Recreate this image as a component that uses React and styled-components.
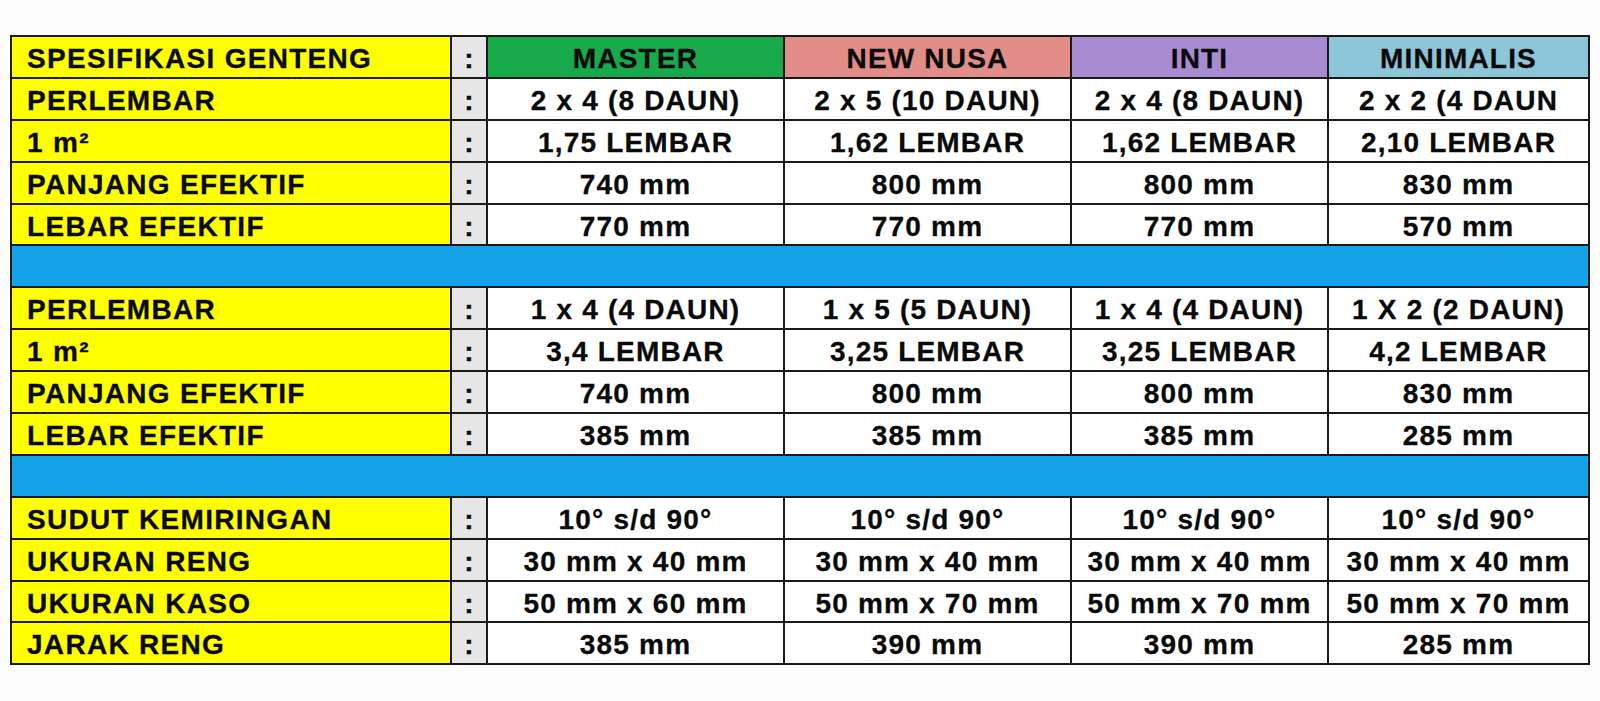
import React from "react";
import styled, { createGlobalStyle } from "styled-components";

const Global = createGlobalStyle`
  html, body { margin: 0; padding: 0; background: #ffffff; }
  body { font-family: "Liberation Sans", Arial, sans-serif; }
`;

const Page = styled.div`
  width: 1600px;
  height: 701px;
  box-sizing: border-box;
  padding: 35px 0 0 10px;
  background: #fdfdfd;
`;

const Table = styled.table`
  border-collapse: collapse;
  table-layout: fixed;
  width: 1578px;
  border: 2px solid #1a1a1a;
  font-family: "Liberation Sans", Arial, sans-serif;
  font-weight: 700;
  font-size: 28px;
  letter-spacing: 1.2px;
  color: #0a0a0a;
  -webkit-text-stroke: 0.3px #0a0a0a;
`;

const Row = styled.tr`
  height: 41.9px;
`;

const Cell = styled.td`
  border: 2px solid #1a1a1a;
  padding: 4px 0 0;
  line-height: 1;
  white-space: nowrap;
  overflow: hidden;
  vertical-align: middle;
`;

const LabelCell = styled(Cell)`
  background: #ffff00;
  padding-left: 15px;
  text-align: left;
  letter-spacing: 1.3px;
`;

const ColonCell = styled(Cell)`
  background: #e6e6e6;
  text-align: center;
  letter-spacing: 0;
`;

const HeaderCell = styled(Cell)`
  background: ${(p) => p.$bg};
  text-align: center;
`;

const ValueCell = styled(Cell)`
  background: #ffffff;
  text-align: center;
`;

const SeparatorCell = styled.td`
  background: #14a2e8;
  padding: 0;
  border-left: 2px solid #1a1a1a;
  border-right: 2px solid #1a1a1a;
`;

const columns = [
  { name: "MASTER", bg: "#17a94a" },
  { name: "NEW NUSA", bg: "#e38d88" },
  { name: "INTI", bg: "#a98bd1" },
  { name: "MINIMALIS", bg: "#8dc5d9" },
];

const sections = [
  [
    ["PERLEMBAR", ["2 x 4 (8 DAUN)", "2 x 5 (10 DAUN)", "2 x 4 (8 DAUN)", "2 x 2 (4 DAUN"]],
    ["1 m²", ["1,75 LEMBAR", "1,62 LEMBAR", "1,62 LEMBAR", "2,10 LEMBAR"]],
    ["PANJANG EFEKTIF", ["740 mm", "800 mm", "800 mm", "830 mm"]],
    ["LEBAR EFEKTIF", ["770 mm", "770 mm", "770 mm", "570 mm"]],
  ],
  [
    ["PERLEMBAR", ["1 x 4 (4 DAUN)", "1 x 5 (5 DAUN)", "1 x 4 (4 DAUN)", "1 X 2 (2 DAUN)"]],
    ["1 m²", ["3,4 LEMBAR", "3,25 LEMBAR", "3,25 LEMBAR", "4,2 LEMBAR"]],
    ["PANJANG EFEKTIF", ["740 mm", "800 mm", "800 mm", "830 mm"]],
    ["LEBAR EFEKTIF", ["385 mm", "385 mm", "385 mm", "285 mm"]],
  ],
  [
    ["SUDUT KEMIRINGAN", ["10° s/d 90°", "10° s/d 90°", "10° s/d 90°", "10° s/d 90°"]],
    ["UKURAN RENG", ["30 mm x 40 mm", "30 mm x 40 mm", "30 mm x 40 mm", "30 mm x 40 mm"]],
    ["UKURAN KASO", ["50 mm x 60 mm", "50 mm x 70 mm", "50 mm x 70 mm", "50 mm x 70 mm"]],
    ["JARAK RENG", ["385 mm", "390 mm", "390 mm", "285 mm"]],
  ],
];

export default function App() {
  return (
    <>
      <Global />
      <Page>
        <Table>
          <colgroup>
            <col style={{ width: 440 }} />
            <col style={{ width: 36 }} />
            <col style={{ width: 297 }} />
            <col style={{ width: 287 }} />
            <col style={{ width: 257 }} />
            <col style={{ width: 261 }} />
          </colgroup>
          <tbody>
            <Row>
              <LabelCell>SPESIFIKASI GENTENG</LabelCell>
              <ColonCell>:</ColonCell>
              {columns.map((c) => (
                <HeaderCell key={c.name} $bg={c.bg}>
                  {c.name}
                </HeaderCell>
              ))}
            </Row>
            {sections.map((rows, si) => (
              <React.Fragment key={si}>
                {si > 0 && (
                  <Row>
                    <SeparatorCell colSpan={6} />
                  </Row>
                )}
                {rows.map(([label, values], ri) => (
                  <Row key={ri}>
                    <LabelCell>{label}</LabelCell>
                    <ColonCell>:</ColonCell>
                    {values.map((v, vi) => (
                      <ValueCell key={vi}>{v}</ValueCell>
                    ))}
                  </Row>
                ))}
              </React.Fragment>
            ))}
          </tbody>
        </Table>
      </Page>
    </>
  );
}
